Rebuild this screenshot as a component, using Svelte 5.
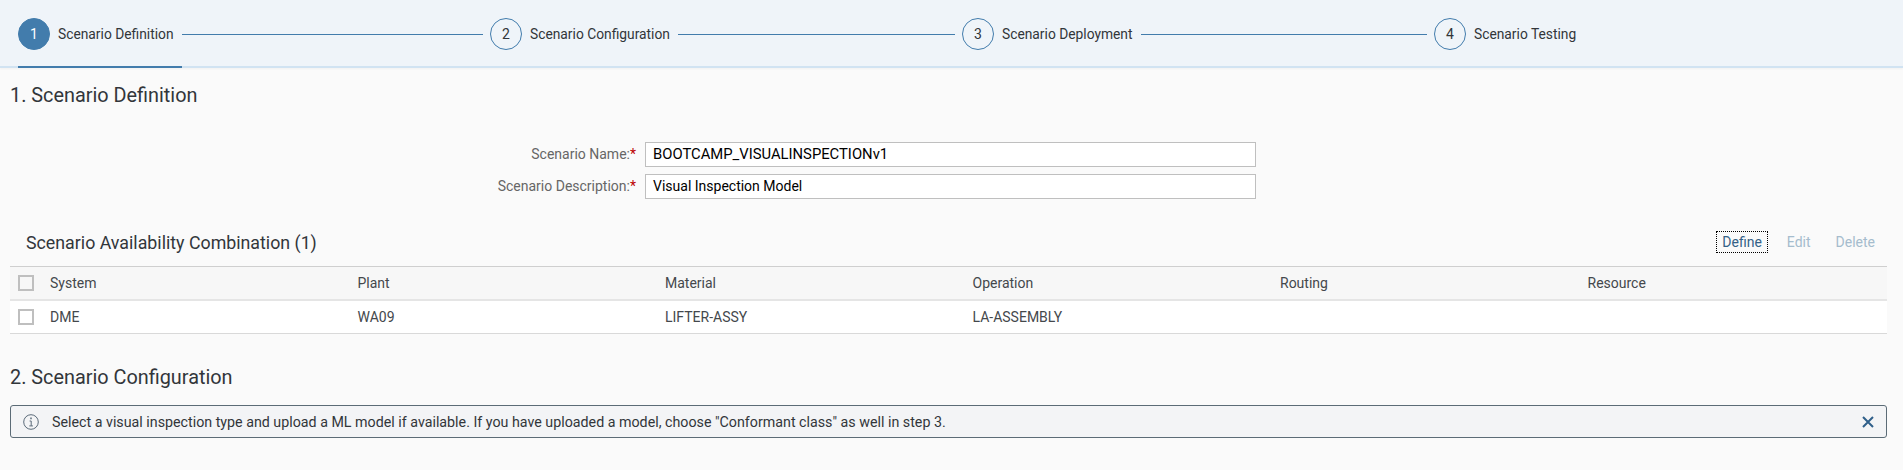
<script>
  const steps = ['Scenario Definition', 'Scenario Configuration', 'Scenario Deployment', 'Scenario Testing'];
  const columns = ['System', 'Plant', 'Material', 'Operation', 'Routing', 'Resource'];
  const row = ['DME', 'WA09', 'LIFTER-ASSY', 'LA-ASSEMBLY', '', ''];
</script>

<div class="page">
  <header class="wizard">
    {#each steps as step, i}
      <div class="step" class:active={i === 0}>
        <span class="circle">{i + 1}</span>
        <span class="step-label">{step}</span>
        {#if i < steps.length - 1}<span class="line"></span>{/if}
      </div>
    {/each}
  </header>

  <h2 class="section first">1. Scenario Definition</h2>

  <div class="form">
    <div class="label">Scenario Name:<span class="req">*</span></div>
    <div class="input name">BOOTCAMP_VISUALINSPECTIONv1</div>
    <div class="label">Scenario Description:<span class="req">*</span></div>
    <div class="input">Visual Inspection Model</div>
  </div>

  <div class="toolbar">
    <h3>Scenario Availability Combination (1)</h3>
    <div class="actions">
      <button class="focused">Define</button>
      <button class="disabled edit">Edit</button>
      <button class="disabled delete">Delete</button>
    </div>
  </div>

  <div class="table">
    <div class="tr head">
      <span class="cb"></span>
      {#each columns as c}<span class="td">{c}</span>{/each}
    </div>
    <div class="tr body">
      <span class="cb"></span>
      {#each row as c}<span class="td">{c}</span>{/each}
    </div>
  </div>

  <h2 class="section second">2. Scenario Configuration</h2>

  <div class="strip">
    <svg class="info" viewBox="0 0 16 16" width="16" height="16" fill="none" stroke="#5b6b7a" stroke-width="1">
      <circle cx="8" cy="8" r="7.3" />
      <path d="M8 3.6v1.6" stroke-width="1.5" />
      <path d="M6.6 7h1.6v4.8M6.3 11.9h3.6" />
    </svg>
    <span class="msg">Select a visual inspection type and upload a ML model if available. If you have uploaded a model, choose "Conformant class" as well in step 3.</span>
    <svg class="close" viewBox="0 0 12 12" width="12" height="12" fill="none" stroke="#2f5f8a" stroke-width="2">
      <path d="M1 1l10 10M11 1L1 11" />
    </svg>
  </div>
</div>

<style>
  :global(body) {
    margin: 0;
    background: #fafafa;
  }
  .page {
    height: 470px;
    overflow: hidden;
    font-family: Roboto, "Liberation Sans", sans-serif;
    color: #32363a;
    background: #fafafa;
  }
  .wizard {
    box-sizing: border-box;
    height: 68px;
    padding: 0 0 0 18px;
    display: grid;
    grid-template-columns: 472px 472px 472px 1fr;
    background: #eff4f9;
    border-bottom: 2px solid #d1e3f2;
    box-shadow: 0 1px 2px rgba(0, 0, 0, 0.04);
  }
  .step {
    position: relative;
    display: flex;
    align-items: center;
    height: 68px;
    box-sizing: border-box;
  }
  .circle {
    flex: none;
    box-sizing: border-box;
    width: 32px;
    height: 32px;
    border: 1px solid #427cac;
    border-radius: 50%;
    display: flex;
    align-items: center;
    justify-content: center;
    font-size: 14px;
    color: #32363a;
  }
  .active .circle {
    background: #427cac;
    color: #fff;
  }
  .step-label {
    margin-left: 8px;
    font-size: 13.8px;
    white-space: nowrap;
  }
  .line {
    flex: 1;
    height: 1px;
    background: #427cac;
    margin: 0 7px 0 8px;
  }
  .active::after {
    content: '';
    position: absolute;
    left: 0;
    width: 164px;
    bottom: 0;
    height: 2px;
    background: #427cac;
  }
  .section {
    margin: 0;
    font-weight: 400;
    font-size: 19.85px;
    line-height: 24px;
    padding-left: 10px;
    color: #32363a;
  }
  .first {
    margin-top: 16px;
  }
  .second {
    margin-top: 32px;
  }
  .form {
    margin-top: 34px;
    display: grid;
    grid-template-columns: 636px 612px;
    column-gap: 8px;
    row-gap: 7px;
  }
  .label {
    text-align: right;
    font-size: 14px;
    line-height: 25px;
    color: #666;
  }
  .req {
    color: #bb0000;
  }
  .input {
    box-sizing: border-box;
    height: 25px;
    margin-left: 1px;
    border: 1px solid #bfbfbf;
    background: #fff;
    padding: 0 7px;
    font-size: 14px;
    line-height: 23px;
    color: #000;
  }
  .name {
    font-size: 14.8px;
  }
  .toolbar {
    margin-top: 19px;
    padding: 0 22px 0 26px;
    height: 48px;
    display: flex;
    align-items: center;
    justify-content: space-between;
  }
  h3 {
    margin: 0;
    font-weight: 400;
    font-size: 17.8px;
    color: #32363a;
  }
  .actions {
    display: flex;
    gap: 3px;
  }
  button {
    background: none;
    border: 1px solid transparent;
    font: inherit;
    font-size: 14px;
    height: 22px;
    padding: 0 5px;
    margin: 0;
    line-height: 20px;
  }
  .focused {
    border: 1px dotted #000;
    color: #346187;
    margin-right: 4px;
  }
  .disabled {
    color: #a5bccd;
  }
  .edit {
    margin-left: 6px;
  }
  .delete {
    margin-left: 10px;
  }
  .table {
    margin: 0 16px 0 10px;
    border-top: 1px solid #cfcfcf;
  }
  .tr {
    position: relative;
    display: grid;
    grid-template-columns: repeat(6, 307.5px);
    padding-left: 40px;
    align-items: center;
    font-size: 14px;
  }
  .head {
    background: #f7f7f7;
    border-bottom: 2px solid #e5e5e5;
    box-sizing: border-box;
    height: 34px;
  }
  .body {
    box-sizing: border-box;
    height: 33px;
    background: #fff;
    border-bottom: 1px solid #d9d9d9;
  }
  .td {
    color: #44484c;
  }
  .cb {
    position: absolute;
    left: 8px;
    top: 50%;
    transform: translateY(-50%);
    box-sizing: border-box;
    width: 16px;
    height: 16px;
    border: 2px solid #bfbfbf;
    background: #fff;
  }
  .head .cb {
    background: #f7f7f7;
  }
  .strip {
    box-sizing: border-box;
    margin: 15px 16px 0 10px;
    height: 33px;
    border: 1px solid #5b6b76;
    border-radius: 3px;
    background: #f3f4f6;
    display: flex;
    align-items: center;
    padding: 0 12px 0 12px;
    font-size: 14.25px;
  }
  .info {
    flex: none;
  }
  .msg {
    flex: 1;
    margin-left: 13px;
    white-space: nowrap;
  }
  .close {
    flex: none;
  }
</style>
